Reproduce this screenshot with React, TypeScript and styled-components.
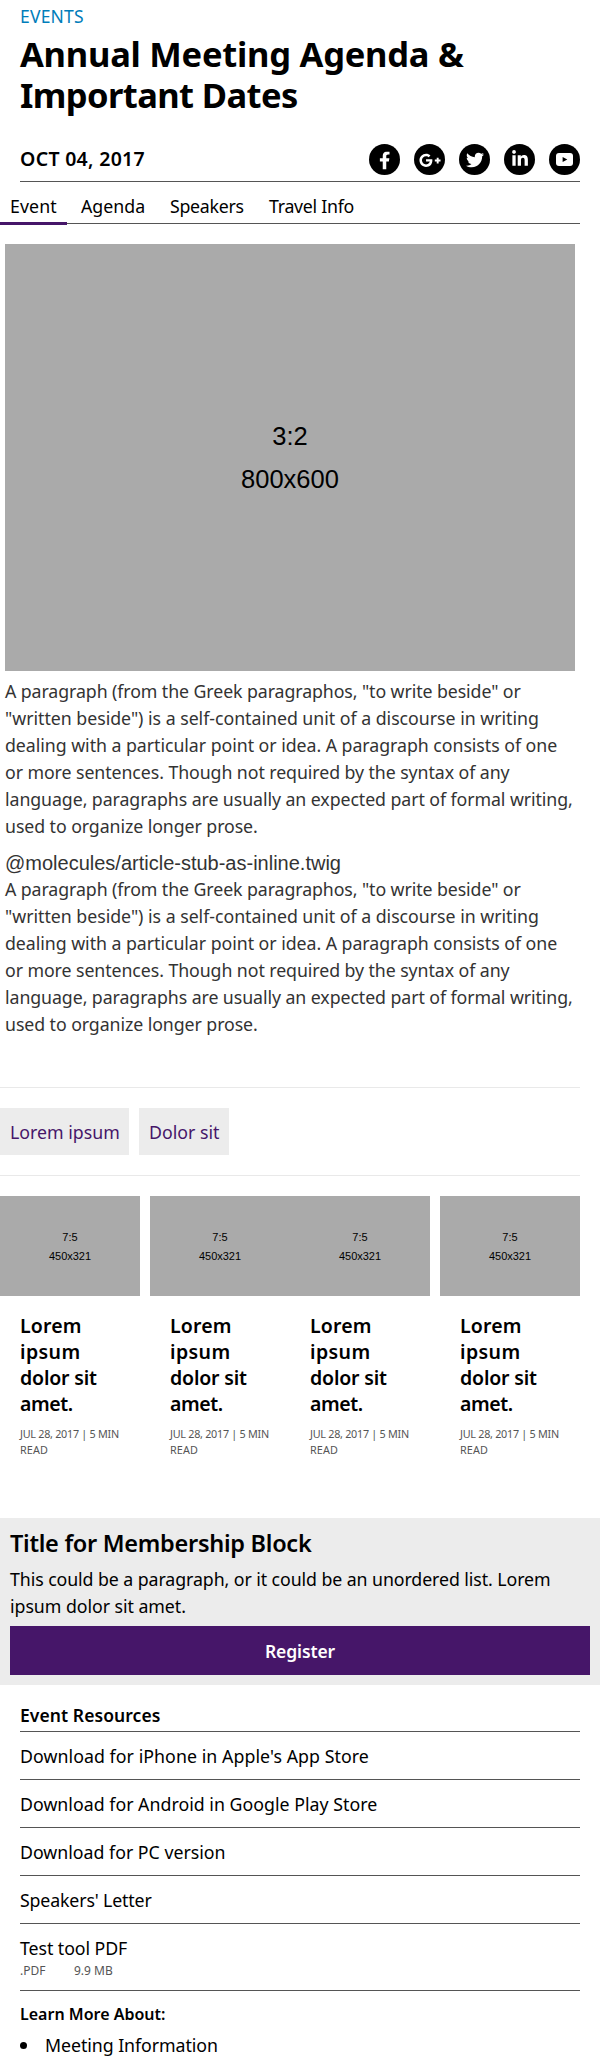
import React from 'react';
import styled, { createGlobalStyle } from 'styled-components';
import { FaFacebookF, FaGooglePlusG, FaTwitter, FaLinkedinIn } from 'react-icons/fa';

const GlobalStyle = createGlobalStyle`
  *, *::before, *::after { box-sizing: border-box; }
  body {
    margin: 0;
    background: #fff;
    color: #000;
    font-family: 'Noto Sans', 'Open Sans', sans-serif;
    font-size: 17.75px;
    line-height: 27px;
  }
  h1, h2, h3, p, ul { margin: 0; padding: 0; }
  ul { list-style: none; }
  a { color: inherit; text-decoration: none; }
`;

const Page = styled.div`
  width: 600px;
  height: 2072px;
  overflow: hidden;
`;

const Line = styled.span<{ $track?: number }>`
  display: block;
  white-space: nowrap;
  letter-spacing: ${(p) => p.$track ?? 0}px;
`;

const Header = styled.header`
  margin: 0 20px;
  padding-top: 5px;
  border-bottom: 1px solid #555;
`;

const Category = styled.a`
  display: block;
  color: #007dba;
  font-size: 17.5px;
  line-height: 23px;
  letter-spacing: 0.2px;
`;

const Title = styled.h1`
  margin-top: 5px;
  font-size: 34.5px;
  font-weight: 700;
  line-height: 41px;
`;

const Byline = styled.div`
  display: flex;
  align-items: flex-start;
  justify-content: space-between;
  height: 37px;
  margin-top: 29px;
`;

const EventDate = styled.time`
  font-size: 19.5px;
  font-weight: 600;
  line-height: 30px;
  letter-spacing: 0.3px;
`;

const ShareList = styled.ul`
  display: flex;
  gap: 14px;
`;

const ShareItem = styled.li<{ $dy?: number; $dx?: number }>`
  display: flex;
  align-items: center;
  justify-content: center;
  width: 31px;
  height: 31px;
  border-radius: 50%;
  background: #000;
  color: #fff;
  svg {
    display: block;
    transform: translate(${(p) => p.$dx ?? 0}px, ${(p) => p.$dy ?? 0}px);
  }
`;

const Tabs = styled.nav`
  display: flex;
  gap: 4px;
  width: 580px;
  height: 42px;
  padding-top: 11px;
  border-bottom: 1px solid #555;
`;

const Tab = styled.a<{ $active?: boolean; $width: number; $track: number }>`
  width: ${(p) => p.$width}px;
  height: 32px;
  padding-left: 10px;
  border-bottom: 3px solid ${(p) => (p.$active ? '#461669' : 'transparent')};
  letter-spacing: ${(p) => p.$track}px;
  white-space: nowrap;
`;

const Body = styled.section`
  width: 570px;
  margin: 20px 0 0 5px;
  color: #333;
`;

const Placeholder = styled.div<{ $large?: boolean }>`
  height: ${(p) => (p.$large ? 427 : 100)}px;
  padding-top: ${(p) => (p.$large ? 171 : 32)}px;
  background: #aaa;
  color: #000;
  font-family: 'Liberation Sans', Arial, sans-serif;
  font-size: ${(p) => (p.$large ? 25.5 : 11)}px;
  line-height: ${(p) => (p.$large ? 43 : 19)}px;
  text-align: center;
`;

const Paragraph = styled.p`
  margin-top: 7px;
`;

const StubNote = styled.div`
  margin: 11px 0 -6px;
  font-family: 'Liberation Sans', Arial, sans-serif;
  font-size: 20px;
  line-height: 24px;
`;

const Tags = styled.ul`
  display: flex;
  gap: 10px;
  width: 580px;
  margin-top: 49px;
  padding: 20px 0;
  border-top: 1px solid #e9e9e9;
  border-bottom: 1px solid #e9e9e9;
`;

const Tag = styled.li<{ $width: number }>`
  width: ${(p) => p.$width}px;
  padding: 11px 0 9px 10px;
  background: #ececec;
  color: #461669;
`;

const Cards = styled.section`
  display: flex;
  width: 580px;
  margin-top: 20px;
`;

const Card = styled.article<{ $gap?: boolean }>`
  width: 140px;
  margin-left: ${(p) => (p.$gap ? 10 : 0)}px;
`;

const CardTitle = styled.h3`
  margin: 17px 0 0 20px;
  font-size: 19.5px;
  font-weight: 600;
  line-height: 26px;
`;

const CardMeta = styled.p`
  margin: 9px 0 0 20px;
  color: #555;
  font-size: 10.8px;
  line-height: 16px;
`;

const Membership = styled.section`
  height: 167px;
  margin-top: 60px;
  padding: 9px 10px 10px;
  background: #ececec;
`;

const MembershipTitle = styled.h2`
  margin-bottom: 7px;
  font-size: 23.5px;
  font-weight: 600;
  line-height: 32px;
`;

const RegisterButton = styled.a`
  display: block;
  height: 49px;
  margin-top: 6px;
  background: #461669;
  color: #fff;
  font-size: 17.5px;
  font-weight: 600;
  line-height: 50px;
  letter-spacing: -0.1px;
  text-align: center;
`;

const Resources = styled.section`
  margin: 16px 20px 0;
`;

const ResourcesTitle = styled.h3`
  height: 31px;
  border-bottom: 1px solid #555;
  font-size: 17.5px;
  font-weight: 600;
  line-height: 28px;
`;

const Resource = styled.li`
  padding: 11px 0 9px;
  border-bottom: 1px solid #555;
`;

const FileMeta = styled.div`
  display: grid;
  grid-template-columns: 54px auto;
  margin-bottom: 2px;
  color: #555;
  font-size: 12px;
  line-height: 17px;
`;

const LearnTitle = styled.h3`
  margin-top: 9px;
  font-size: 16px;
  font-weight: 600;
  line-height: 28px;
`;

const LearnItem = styled.li`
  display: flex;
  align-items: center;
  gap: 18px;
  margin-top: 4px;
  letter-spacing: -0.06px;
  &::before {
    content: '';
    width: 7px;
    height: 7px;
    border-radius: 50%;
    background: #000;
  }
`;

const paragraph: [string, number][] = [
  ['A paragraph (from the Greek paragraphos, "to write beside" or', -0.09],
  ['"written beside") is a self-contained unit of a discourse in writing', -0.025],
  ['dealing with a particular point or idea. A paragraph consists of one', -0.045],
  ['or more sentences. Though not required by the syntax of any', -0.08],
  ['language, paragraphs are usually an expected part of formal writing,', -0.08],
  ['used to organize longer prose.', -0.08],
];

const cardTitle: [string, number][] = [
  ['Lorem', 0.17],
  ['ipsum', 0.4],
  ['dolor sit', -0.17],
  ['amet.', -0.45],
];

const downloads: [string, number][] = [
  ["Download for iPhone in Apple's App Store", 0.06],
  ['Download for Android in Google Play Store', 0.02],
  ['Download for PC version', 0],
  ["Speakers' Letter", -0.15],
];

const renderLines = (lines: [string, number][]) =>
  lines.map(([text, track]) => (
    <Line key={text} $track={track}>
      {text}
    </Line>
  ));

const YouTubeIcon = () => (
  <svg width="17" height="13" viewBox="0 0 17 13">
    <rect width="17" height="13" rx="3" fill="#fff" />
    <path d="M6.6 4v5l4.7-2.5z" fill="#000" />
  </svg>
);

export default function App() {
  return (
    <Page>
      <GlobalStyle />
      <Header>
        <Category>EVENTS</Category>
        <Title>
          <Line $track={-0.25}>Annual Meeting Agenda &amp;</Line>
          <Line $track={-0.6}>Important Dates</Line>
        </Title>
        <Byline>
          <EventDate>OCT 04, 2017</EventDate>
          <ShareList>
            <ShareItem $dy={0.4} $dx={-0.3}>
              <FaFacebookF size={18} />
            </ShareItem>
            <ShareItem $dy={0.3}>
              <FaGooglePlusG size={22} />
            </ShareItem>
            <ShareItem>
              <FaTwitter size={18} />
            </ShareItem>
            <ShareItem $dy={-1}>
              <FaLinkedinIn size={18} />
            </ShareItem>
            <ShareItem>
              <YouTubeIcon />
            </ShareItem>
          </ShareList>
        </Byline>
      </Header>

      <Tabs>
        <Tab $active $width={67} $track={0.1}>Event</Tab>
        <Tab $width={85} $track={0}>Agenda</Tab>
        <Tab $width={95} $track={-0.27}>Speakers</Tab>
        <Tab $width={106} $track={-0.27}>Travel Info</Tab>
      </Tabs>

      <Body>
        <Placeholder $large>
          <Line>3:2</Line>
          <Line>800x600</Line>
        </Placeholder>
        <Paragraph>{renderLines(paragraph)}</Paragraph>
        <StubNote>@molecules/article-stub-as-inline.twig</StubNote>
        <Paragraph>{renderLines(paragraph)}</Paragraph>
      </Body>

      <Tags>
        <Tag $width={129}>
          <Line>Lorem ipsum</Line>
        </Tag>
        <Tag $width={90}>
          <Line>Dolor sit</Line>
        </Tag>
      </Tags>

      <Cards>
        {[false, true, false, true].map((gap, i) => (
          <Card key={i} $gap={gap}>
            <Placeholder>
              <Line>7:5</Line>
              <Line>450x321</Line>
            </Placeholder>
            <CardTitle>{renderLines(cardTitle)}</CardTitle>
            <CardMeta>
              <Line $track={-0.27}>JUL 28, 2017 | 5 MIN</Line>
              <Line $track={0.1}>READ</Line>
            </CardMeta>
          </Card>
        ))}
      </Cards>

      <Membership>
        <MembershipTitle>
          <Line $track={-0.28}>Title for Membership Block</Line>
        </MembershipTitle>
        <p>
          <Line $track={-0.08}>This could be a paragraph, or it could be an unordered list. Lorem</Line>
          <Line $track={-0.05}>ipsum dolor sit amet.</Line>
        </p>
        <RegisterButton>Register</RegisterButton>
      </Membership>

      <Resources>
        <ResourcesTitle>
          <Line $track={0.07}>Event Resources</Line>
        </ResourcesTitle>
        <ul>
          {downloads.map(([text, track]) => (
            <Resource key={text}>
              <Line $track={track}>{text}</Line>
            </Resource>
          ))}
          <Resource>
            <Line $track={-0.07}>Test tool PDF</Line>
            <FileMeta>
              <Line $track={0}>.PDF</Line>
              <Line>9.9 MB</Line>
            </FileMeta>
          </Resource>
        </ul>
        <LearnTitle>
          <Line>Learn More About:</Line>
        </LearnTitle>
        <ul>
          <LearnItem>Meeting Information</LearnItem>
        </ul>
      </Resources>
    </Page>
  );
}
